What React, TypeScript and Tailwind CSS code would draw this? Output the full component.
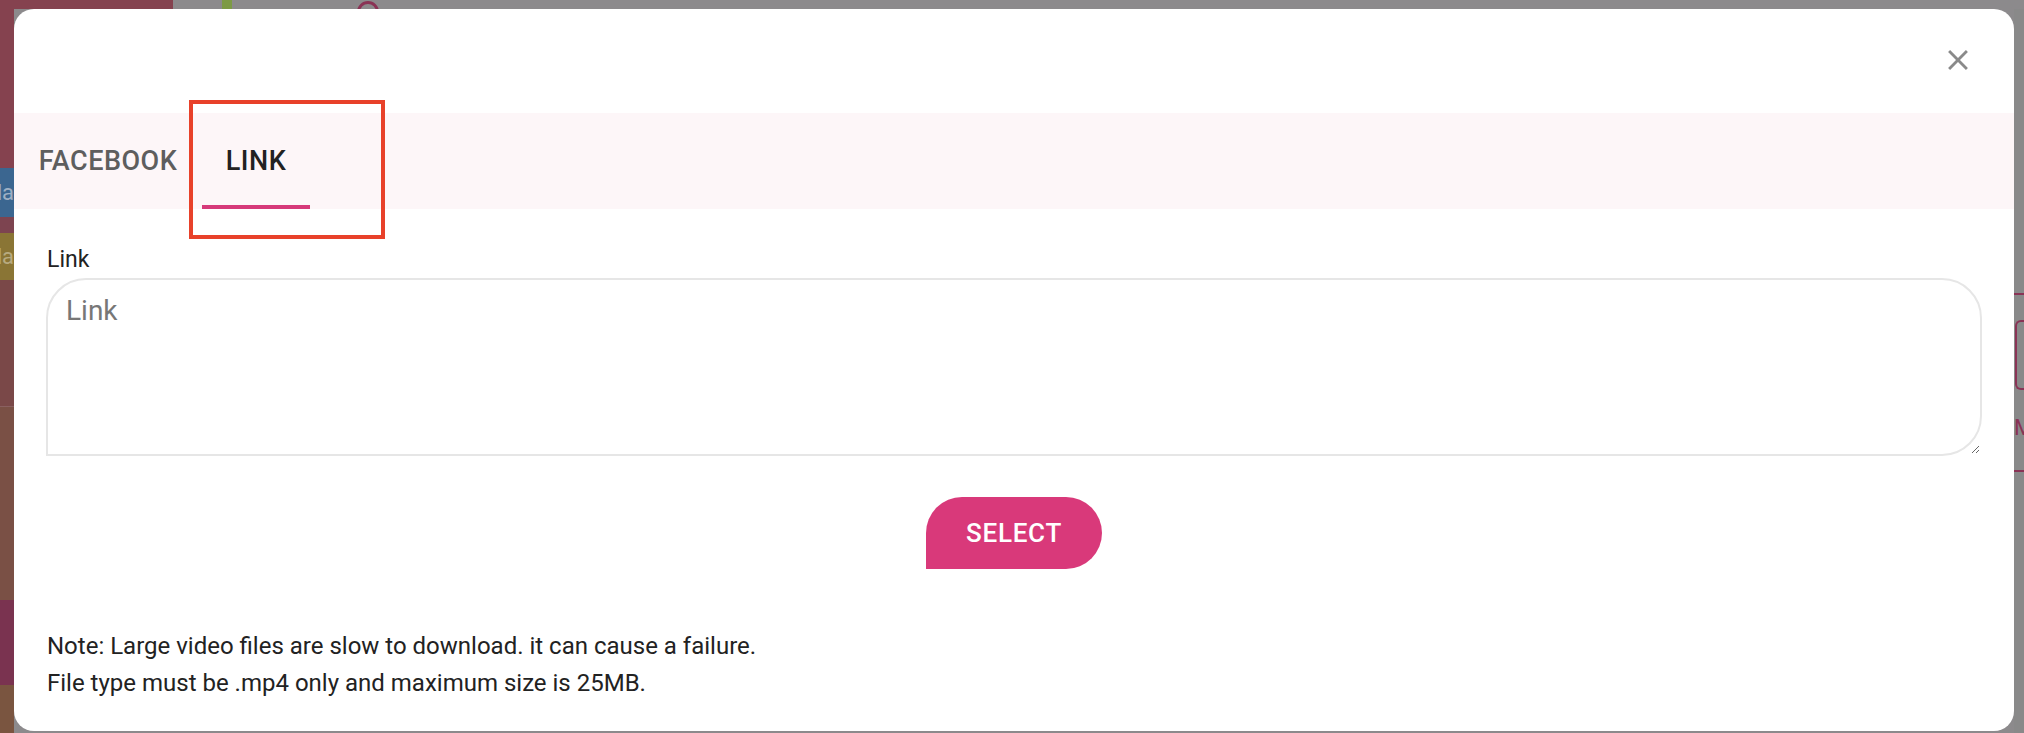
import React, { useState } from 'react';

const font = { fontFamily: 'Roboto, "Noto Sans", sans-serif' };

function CloseIcon() {
  return (
    <svg viewBox="0 0 24 24" className="h-[34px] w-[34px]" fill="#8a8a8a">
      <path d="M19 6.41 17.59 5 12 10.59 6.41 5 5 6.41 10.59 12 5 17.59 6.41 19 12 13.41 17.59 19 19 17.59 13.41 12z" />
    </svg>
  );
}

// dimmed page that sits behind the dialog
function Backdrop() {
  return (
    <div className="flex h-full w-full bg-[#8c8a8c]">
      <div className="flex w-[14px] shrink-0 flex-col text-[22px] leading-none text-[#9fb0c4]">
        <div className="h-[168px] bg-[#85424f]" />
        <div className="flex h-[49px] items-center justify-end overflow-hidden whitespace-nowrap bg-[#3b6690]">da</div>
        <div className="h-[16px] bg-[#7d4450]" />
        <div className="flex h-[47px] items-center justify-end overflow-hidden whitespace-nowrap bg-[#8a7535] text-[#b8ab80]">da</div>
        <div className="h-[126px] bg-[#7a4848]" />
        <div className="h-[1px] bg-[#8a6060]" />
        <div className="h-[193px] bg-[#7a5045]" />
        <div className="h-[85px] bg-[#7a3350]" />
        <div className="flex-1 bg-[#7a5540]" />
      </div>
      <div className="flex flex-1 flex-col">
        <div className="flex h-[9px]">
          <div className="w-[159px] bg-[#85424f]" />
          <div className="ml-[49px] w-[10px] bg-[#7d9a45]" />
          <div className="ml-[125px] mt-[1px] h-[22px] w-[22px] rounded-full border-[3px] border-[#8a3355]" />
        </div>
        <div className="flex flex-1 justify-end">
          <div className="flex w-[10px] flex-col overflow-hidden bg-[#898989]">
            <div className="mt-[284px] h-[2px] bg-[#8a3355]" />
            <div className="ml-[1px] mt-[25px] h-[70px] w-[12px] rounded-l-[6px] border-[2px] border-r-0 border-[#8a3355]" />
            <div className="mt-[27px] text-[22px] leading-none text-[#8a3355]">M</div>
            <div className="mt-[31px] h-[2px] bg-[#8a3355]" />
          </div>
        </div>
      </div>
    </div>
  );
}

export default function App() {
  const [tab, setTab] = useState('link');
  const [link, setLink] = useState('');

  return (
    <div className="relative h-[733px] w-[2024px] overflow-hidden" style={font}>
      <Backdrop />

      {/* dialog */}
      <div className="absolute left-[14px] top-[9px] flex h-[722px] w-[2000px] flex-col rounded-[20px] bg-white">
        <div className="flex h-[104px] shrink-0 items-start justify-end pr-[39px] pt-[34px]">
          <button className="flex items-center justify-center">
            <CloseIcon />
          </button>
        </div>

        <div className="flex h-[96px] shrink-0 bg-[#fdf6f8]">
          {[
            { id: 'facebook', label: 'FACEBOOK', w: 'w-[188px]' },
            { id: 'link', label: 'LINK', w: 'w-[108px]' },
          ].map((t) => (
            <button
              key={t.id}
              onClick={() => setTab(t.id)}
              className={`relative flex h-full items-center justify-center text-[27px] font-medium tracking-[0.5px] ${t.w} ${
                tab === t.id ? 'text-[#222222]' : 'text-[#5e5e5e]'
              }`}
            >
              {t.label}
              {tab === t.id && <span className="absolute bottom-0 left-0 h-[4px] w-full bg-[#d63a7a]" />}
            </button>
          ))}
        </div>

        <div className="flex flex-col px-[32px] pt-[36px]">
          <label className="pl-[1px] text-[23px] leading-[30px] text-[#222222]">Link</label>
          <textarea
            value={link}
            onChange={(e) => setLink(e.target.value)}
            placeholder="Link"
            className="mt-[3px] h-[178px] w-[1936px] rounded-tl-[40px] rounded-tr-[40px] rounded-br-[40px] border-2 border-[#e6e6e6] pl-[18px] pt-[13px] text-[28px] leading-[36px] text-[#222222] outline-none placeholder:text-[#777777]"
          />
          <div className="mt-[41px] flex justify-center">
            <button className="flex h-[72px] w-[176px] items-center justify-center rounded-tl-[36px] rounded-tr-[36px] rounded-br-[36px] bg-[#d9397a] text-[26px] font-medium tracking-[0.74px] text-white">
              SELECT
            </button>
          </div>
          <div className="mt-[59px] pl-[1px] text-[24px] leading-[37px] text-[#222222]">
            <p>Note: Large video files are slow to download. it can cause a failure.</p>
            <p>File type must be .mp4 only and maximum size is 25MB.</p>
          </div>
        </div>

        {/* annotation frame around the active tab */}
        <div className="pointer-events-none absolute left-[175px] top-[91px] h-[139px] w-[196px] border-4 border-[#e8412a]" />
      </div>
    </div>
  );
}
